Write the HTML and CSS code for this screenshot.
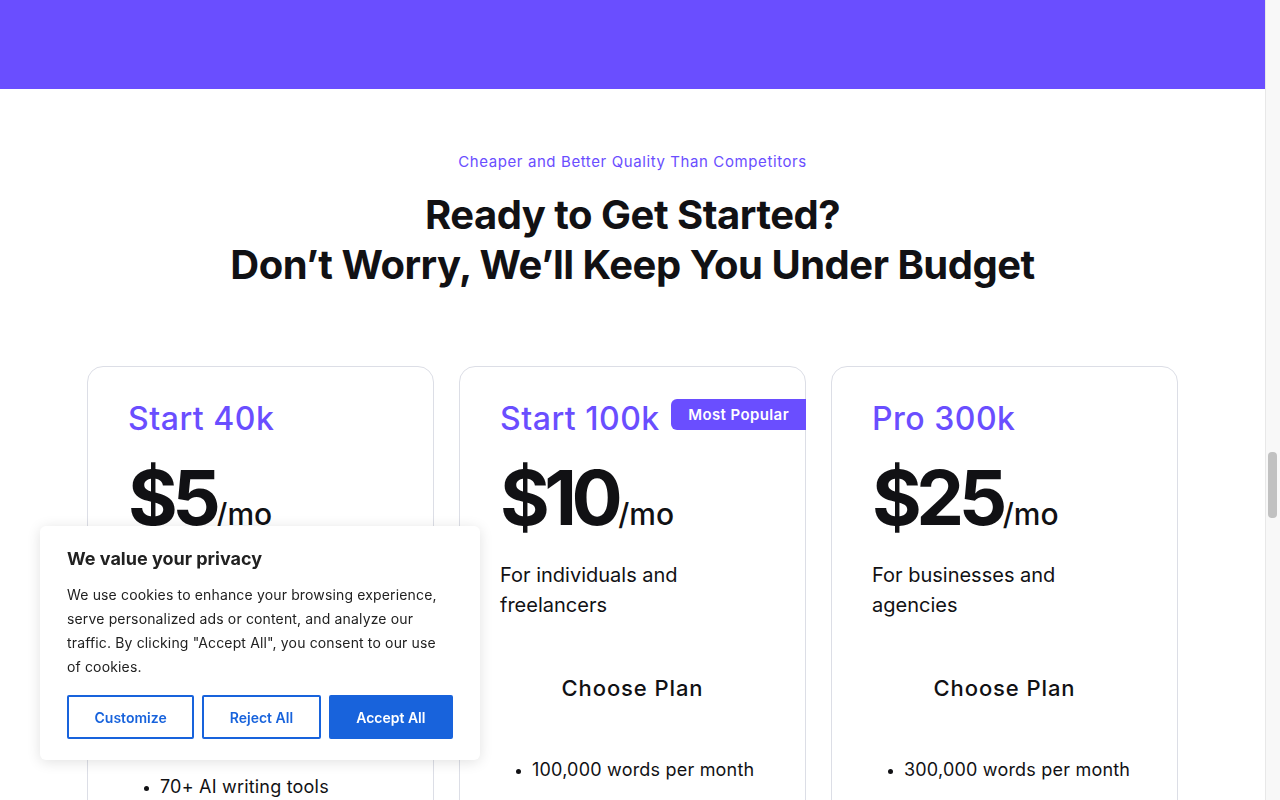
FILE: index.html
```html
<!DOCTYPE html>
<html lang="en">
<head>
<meta charset="utf-8">
<title>Pricing</title>
<link rel="stylesheet" href="styles.css">
</head>
<body>
<div class="viewport">
  <main class="page">
    <div class="band"></div>
    <section class="pricing">
      <p class="eyebrow">Cheaper and Better Quality Than Competitors</p>
      <h1 class="title">Ready to Get Started?<br>Don’t Worry, We’ll Keep You Under Budget</h1>
      <div class="cards">
        <article class="card">
          <h3 class="plan">Start 40k</h3>
          <div class="price"><span class="amount">$5</span><span class="per">/mo</span></div>
          <p class="desc">For beginners and personal projects</p>
          <div class="choose">Choose Plan</div>
          <ul class="features first">
            <li>40,000 words per month</li>
            <li>70+ AI writing tools</li>
          </ul>
        </article>
        <article class="card">
          <span class="badge">Most Popular</span>
          <h3 class="plan">Start 100k</h3>
          <div class="price"><span class="amount">$10</span><span class="per">/mo</span></div>
          <p class="desc">For individuals and freelancers</p>
          <div class="choose">Choose Plan</div>
          <ul class="features">
            <li>100,000 words per month</li>
            <li>70+ AI writing tools</li>
          </ul>
        </article>
        <article class="card">
          <h3 class="plan">Pro 300k</h3>
          <div class="price"><span class="amount">$25</span><span class="per">/mo</span></div>
          <p class="desc">For businesses and agencies</p>
          <div class="choose">Choose Plan</div>
          <ul class="features">
            <li>300,000 words per month</li>
            <li>70+ AI writing tools</li>
          </ul>
        </article>
      </div>
    </section>
  </main>
  <div class="scrollbar"><div class="thumb"></div></div>
</div>
<div class="cookie">
  <p class="cookie-title">We value your privacy</p>
  <p class="cookie-text">We use cookies to enhance your browsing experience, serve personalized ads or content, and analyze our traffic. By clicking "Accept All", you consent to our use of cookies.</p>
  <div class="cookie-actions">
    <button class="btn outline">Customize</button>
    <button class="btn outline">Reject All</button>
    <button class="btn solid">Accept All</button>
  </div>
</div>
</body>
</html>
```
FILE: styles.css
```css
* { box-sizing: border-box; }
html, body { margin: 0; padding: 0; }
body {
  font-family: Inter, "Noto Sans", sans-serif;
  color: #111114;
  background: #fff;
  overflow: hidden;
}
.viewport {
  display: flex;
  height: 800px;
  overflow: hidden;
}
.page {
  width: 1265px;
  flex: none;
}
.band {
  height: 89px;
  background: #6a4eff;
}
.pricing {
  text-align: center;
  padding-top: 63px;
}
.eyebrow {
  margin: 0;
  font-size: 15px;
  line-height: 20px;
  color: #6a4eff;
  letter-spacing: 0.6px;
}
.title {
  margin: 18px 0 0;
  font-size: 40px;
  line-height: 50px;
  font-weight: 700;
  letter-spacing: -0.5px;
  color: #111114;
}
.cards {
  display: flex;
  gap: 25px;
  width: 1091px;
  margin: 76px auto 0;
  text-align: left;
}
.card {
  position: relative;
  flex: 1;
  border: 1px solid #dcdee6;
  border-radius: 16px;
  padding: 32px 40px 40px;
  height: 520px;
}
.plan {
  margin: 0;
  font-size: 32px;
  line-height: 40px;
  font-weight: 500;
  color: #6a4eff;
  letter-spacing: 0.5px;
}
.badge {
  position: absolute;
  top: 32px;
  right: -1px;
  background: #6a4eff;
  color: #fff;
  font-size: 15px;
  font-weight: 600;
  line-height: 31px;
  letter-spacing: 0.4px;
  padding: 0 17px 0 17px;
  border-radius: 6px 0 0 6px;
}
.price {
  margin-top: 18px;
  height: 80px;
  line-height: 80px;
  white-space: nowrap;
}
.amount {
  font-size: 76px;
  font-weight: 700;
  letter-spacing: -5.5px;
}
.per {
  font-size: 30px;
  line-height: 30px;
  font-weight: 500;
  margin-left: 1px;
}
.desc {
  margin: 23px 0 0;
  font-size: 20px;
  line-height: 30px;
  width: 200px;
}
.choose {
  margin-top: 53px;
  text-align: center;
  font-size: 22px;
  line-height: 30px;
  font-weight: 500;
  letter-spacing: 0.9px;
}
.features {
  margin: 52px 0 0;
  padding: 0 0 0 32px;
  font-size: 18px;
  line-height: 30px;
  letter-spacing: 0.2px;
}
.features li { margin-bottom: 12px; }
.features li::marker { font-size: 14px; }
.features.first { margin-top: 27px; }
.scrollbar {
  width: 15px;
  flex: none;
  background: #f8f8f8;
  border-left: 1px solid #e8e8e8;
  padding: 452px 3px 0 2px;
}
.thumb {
  height: 66px;
  background: #c1c1c1;
  border-radius: 4px;
}
.cookie {
  position: fixed;
  left: 40px;
  bottom: 40px;
  width: 440px;
  background: #fff;
  border-radius: 6px;
  box-shadow: 0 2px 14px rgba(0,0,0,0.12);
  padding: 22px 27px 21px;
  color: #212121;
}
.cookie-title {
  margin: 0;
  font-size: 18px;
  line-height: 22px;
  font-weight: 700;
}
.cookie-text {
  margin: 13px 0 0;
  font-size: 14px;
  line-height: 24px;
  letter-spacing: 0.15px;
}
.cookie-actions {
  display: flex;
  gap: 8px;
  margin-top: 16px;
}
.btn {
  flex: 1 1 auto;
  height: 44px;
  font-family: inherit;
  font-size: 14px;
  font-weight: 600;
  border: 2px solid #1863dc;
  border-radius: 2px;
  padding: 0 8px;
}
.outline { background: #fff; color: #1863dc; }
.solid { background: #1863dc; color: #fff; }
```
